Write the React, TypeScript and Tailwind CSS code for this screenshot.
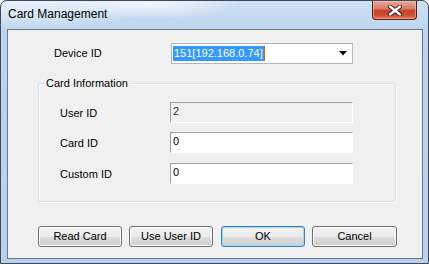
import React from "react";

function CloseButton() {
  return (
    <div className="ml-auto mr-[6px] flex h-[19px] w-[45px] items-center justify-center self-start rounded-b-[4px] border border-t-0 border-[#5a1b10] bg-[linear-gradient(#e8a898_0%,#d77a63_45%,#c2452b_50%,#c94a2f_75%,#e0745a_100%)] shadow-[inset_0_0_0_1px_rgba(255,220,210,0.45)]">
      <svg width="14" height="11" viewBox="0 0 14 11">
        <path d="M2 1.5 L12 9.5 M12 1.5 L2 9.5" stroke="#3c1208" strokeWidth="4.2" strokeLinecap="round" />
        <path d="M2 1.5 L12 9.5 M12 1.5 L2 9.5" stroke="#ffffff" strokeWidth="2.4" strokeLinecap="round" />
      </svg>
    </div>
  );
}

function Field({ label, value, readOnly }: { label: string; value: string; readOnly?: boolean }) {
  return (
    <div className="flex h-[21px] items-center">
      <div className="ml-[21px] w-[110px] pt-[1px]">{label}</div>
      <div
        className={
          "h-[21px] w-[183px] border-t border-l border-r border-b border-t-[#a0a0a0] border-l-[#a0a0a0] border-r-white border-b-white pl-[2px] pt-[1px] leading-[14px] " +
          (readOnly ? "bg-[#f0f0f0] text-[#333]" : "bg-white text-black")
        }
      >
        {value}
      </div>
    </div>
  );
}

function Btn({ children, primary, className }: { children: React.ReactNode; primary?: boolean; className?: string }) {
  return (
    <button
      className={
        "flex h-[21px] items-center justify-center rounded-[3px] border bg-[linear-gradient(#f2f2f2_0%,#ebebeb_50%,#dddddd_51%,#cfcfcf_100%)] text-[11px] text-black " +
        (primary
          ? "border-[#3c7fb1] shadow-[inset_0_0_0_1px_#9fd8f3] "
          : "border-[#707070] shadow-[inset_0_0_0_1px_#fbfbfb] ") +
        (className ?? "")
      }
    >
      {children}
    </button>
  );
}

export default function App() {
  return (
    <div className="flex h-[264px] w-[429px] flex-col overflow-hidden rounded-t-[7px] border border-[#3d4a5a] bg-[radial-gradient(ellipse_90px_16px_at_150px_2px,rgba(255,255,255,0.75),transparent),radial-gradient(ellipse_140px_30px_at_20px_0px,rgba(255,255,255,0.6),transparent),linear-gradient(#cfe1f3,#bcd4ee_30px,#b9d1ea)] pl-[6px] pr-[5px] pb-[4px] font-['Liberation_Sans',Arial,sans-serif] text-[11px] text-black">
      {/* title bar */}
      <div className="flex h-[28px] shrink-0 items-center">
        <span className="pl-[1px] pb-[2px] text-[12px] text-black">Card Management</span>
        <CloseButton />
      </div>

      {/* client area */}
      <div className="flex h-[230px] flex-col border border-[#6b7888] bg-[#f0f0f0]">
        <div className="mt-[13px] flex h-[21px] items-center">
          <div className="ml-[46px] w-[117px]">Device ID</div>
          <div className="flex h-[21px] w-[182px] items-center border border-[#abb7c5] bg-white pl-[1px]">
            <span className="bg-[#3399ff] pl-[1px] pr-[1px] leading-[15px] text-white">151[192.168.0.74]</span>
            <span className="h-[15px] w-px bg-[#c8641c]" />
            <svg className="ml-auto mr-[5px]" width="8" height="5" viewBox="0 0 8 5">
              <path d="M0 0 H8 L4 4.5 Z" fill="#000" />
            </svg>
          </div>
        </div>

        <div className="relative ml-[30px] mt-[19px] h-[119px] w-[358px] rounded-[3px] border border-[#d5dfe5] shadow-[inset_1px_1px_0_#fff,1px_1px_0_#fff]">
          <span className="absolute -top-[7px] left-[5px] bg-[#f0f0f0] px-[2px] leading-[13px]">Card Information</span>
          <div className="mt-[18px] flex flex-col">
            <Field label="User ID" value="2" readOnly />
            <div className="mt-[9px]">
              <Field label="Card ID" value="0" />
            </div>
            <div className="mt-[10px]">
              <Field label="Custom ID" value="0" />
            </div>
          </div>
        </div>

        <div className="ml-[30px] mt-[24px] flex">
          <Btn className="w-[84px]">Read Card</Btn>
          <Btn className="ml-[7px] w-[84px]">Use User ID</Btn>
          <Btn primary className="ml-[8px] w-[84px]">OK</Btn>
          <Btn className="ml-[7px] w-[85px]">Cancel</Btn>
        </div>
      </div>
    </div>
  );
}
